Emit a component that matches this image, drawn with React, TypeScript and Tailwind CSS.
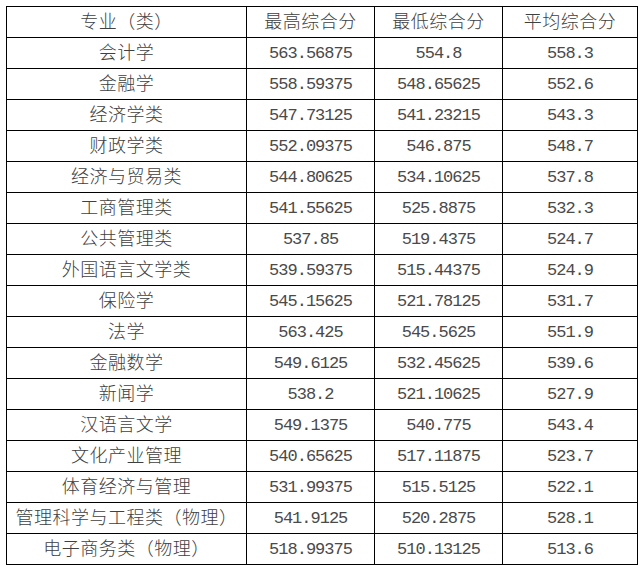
import React from 'react';

const rows: [string, string, string, string][] = [
  ['会计学', '563.56875', '554.8', '558.3'],
  ['金融学', '558.59375', '548.65625', '552.6'],
  ['经济学类', '547.73125', '541.23215', '543.3'],
  ['财政学类', '552.09375', '546.875', '548.7'],
  ['经济与贸易类', '544.80625', '534.10625', '537.8'],
  ['工商管理类', '541.55625', '525.8875', '532.3'],
  ['公共管理类', '537.85', '519.4375', '524.7'],
  ['外国语言文学类', '539.59375', '515.44375', '524.9'],
  ['保险学', '545.15625', '521.78125', '531.7'],
  ['法学', '563.425', '545.5625', '551.9'],
  ['金融数学', '549.6125', '532.45625', '539.6'],
  ['新闻学', '538.2', '521.10625', '527.9'],
  ['汉语言文学', '549.1375', '540.775', '543.4'],
  ['文化产业管理', '540.65625', '517.11875', '523.7'],
  ['体育经济与管理', '531.99375', '515.5125', '522.1'],
  ['管理科学与工程类（物理）', '541.9125', '520.2875', '528.1'],
  ['电子商务类（物理）', '518.99375', '510.13125', '513.6'],
];

// SimSun-like look: light CJK, mono digits
const cjk = "font-['Noto_Sans_CJK_SC',sans-serif] text-[18px] tracking-[0.5px] font-light leading-none pb-[4px]";
const num = "font-['Liberation_Mono','Noto_Sans_CJK_SC',monospace] text-[17px] tracking-[-1px] leading-none text-[#4a4a4a]";

export default function App() {
  return (
    <div className="min-h-[569px] bg-white pl-[6px] pt-[6px]">
      <table className="border-collapse border border-black text-[#404040]">
        <thead>
          <tr className="h-[31px]">
            <th className={`w-[240px] border border-black px-0 pt-0 text-center ${cjk}`}>专业（类）</th>
            <th className={`w-[128px] border border-black px-0 pt-0 text-center ${cjk}`}>最高综合分</th>
            <th className={`w-[128px] border border-black px-0 pt-0 text-center ${cjk}`}>最低综合分</th>
            <th className={`w-[135px] border border-black px-0 pt-0 text-center ${cjk}`}>平均综合分</th>
          </tr>
        </thead>
        <tbody>
          {rows.map((r) => (
            <tr key={r[0]} className="h-[31px]">
              <td className={`border border-black px-0 pt-0 text-center ${cjk}`}>{r[0]}</td>
              <td className={`border border-black p-0 text-center ${num}`}>{r[1]}</td>
              <td className={`border border-black p-0 text-center ${num}`}>{r[2]}</td>
              <td className={`border border-black p-0 text-center ${num}`}>{r[3]}</td>
            </tr>
          ))}
        </tbody>
      </table>
    </div>
  );
}
